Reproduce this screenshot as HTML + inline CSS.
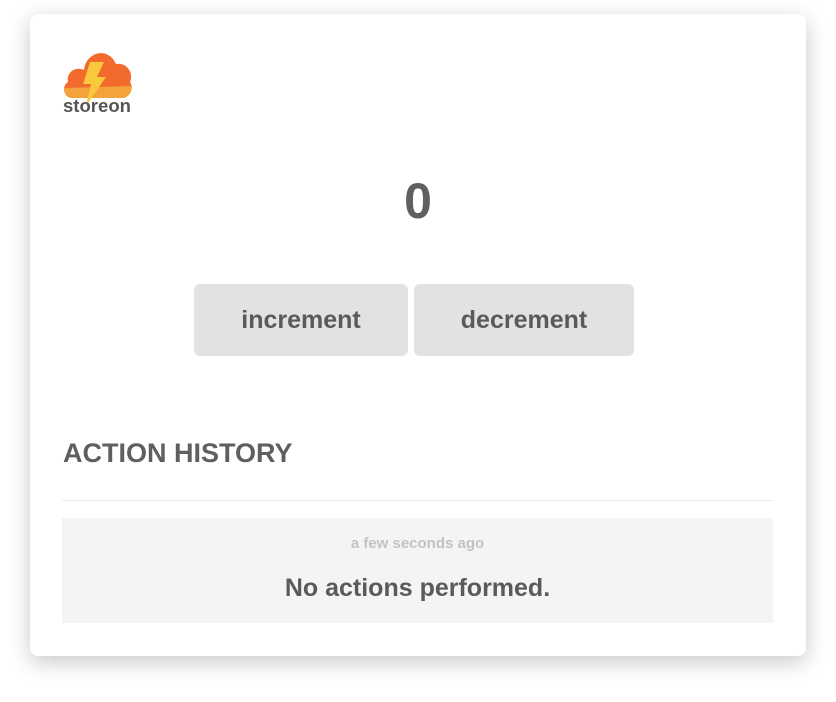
<!DOCTYPE html>
<html><head><style>
body{margin:0;background:#fff;width:836px;height:702px;overflow:hidden;font-family:"Liberation Sans",sans-serif;font-weight:bold;color:#5f5f5f}
.card{position:absolute;left:30px;top:14px;width:776px;height:642px;background:#fff;border-radius:8px;box-shadow:0 6px 22px rgba(0,0,0,.22)}
.btn{position:absolute;top:284px;height:72px;background:#e1e2e4;border-radius:6px;font-size:25px;display:flex;align-items:center;justify-content:center;color:#5a5a5a}
</style></head><body>
<div class="card"></div>
<svg style="position:absolute;left:62px;top:46px" width="72" height="70" viewBox="0 0 72 70">
<path d="M10 52 C2 52 -1 40 6 36 C4 26 14 20 22 24 C24 6 46 0 54 18 C64 16 72 26 68 36 C72 42 68 52 60 52 Z" fill="#f26a2c"/>
<path d="M2 42 C2 48 6 52 10 52 L60 52 C66 52 70 46 70 40 Z" fill="#f4a33a"/>
<path d="M28 16 L42 16 L35 31 L44 31 L24 60 L29 38 L21 38 Z" fill="#f8c93c"/>
<text x="35" y="66" text-anchor="middle" font-family="Liberation Sans" font-weight="bold" font-size="18" fill="#555" textLength="68" lengthAdjust="spacingAndGlyphs">storeon</text>
</svg>
<div style="position:absolute;left:0;width:836px;top:172px;text-align:center;font-size:50px;color:#5f5f5f">0</div>
<div class="btn" style="left:194px;width:214px">increment</div>
<div class="btn" style="left:414px;width:220px">decrement</div>
<div style="position:absolute;left:63px;top:438px;font-size:27px;color:#5f5f5f">ACTION HISTORY</div>
<div style="position:absolute;left:62px;top:500px;width:711px;height:1px;background:#ececec"></div>
<div style="position:absolute;left:62px;top:518px;width:711px;height:105px;background:#f4f4f4;text-align:center">
<div style="margin-top:17px;font-size:15px;color:#c3c3c3">a few seconds ago</div>
<div style="margin-top:22px;font-size:25px;color:#5a5a5a">No actions performed.</div>
</div>
</body></html>
